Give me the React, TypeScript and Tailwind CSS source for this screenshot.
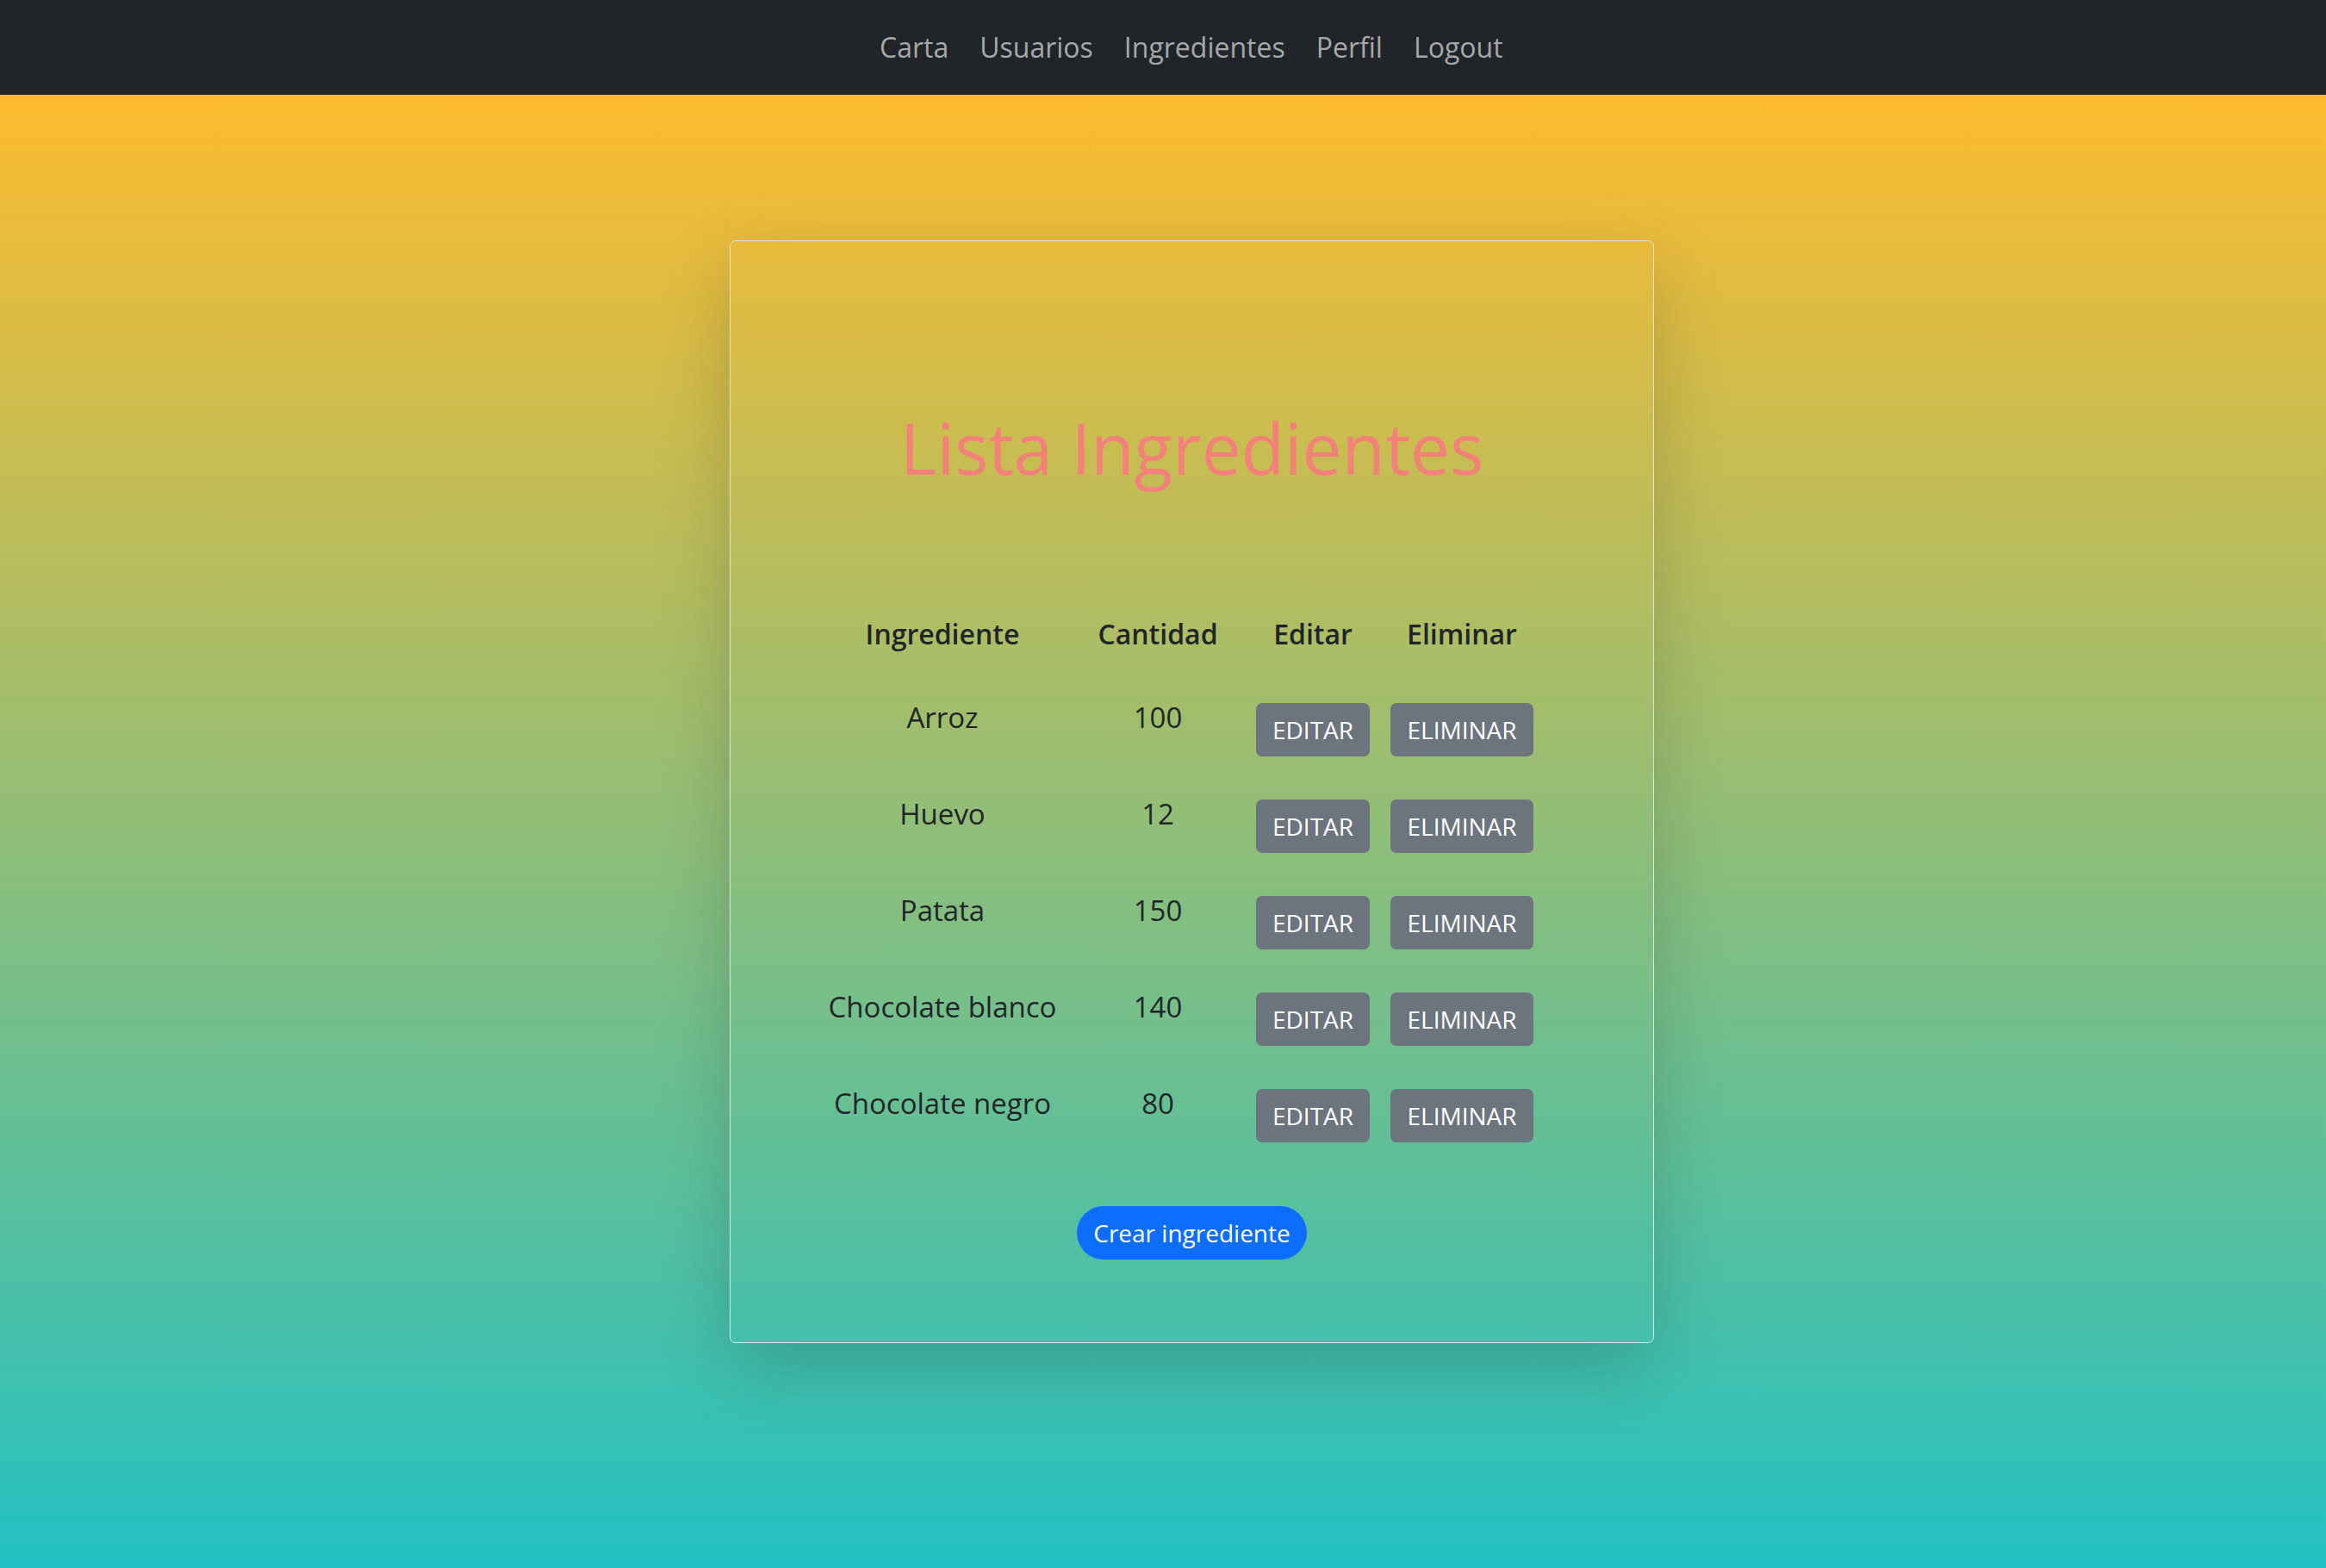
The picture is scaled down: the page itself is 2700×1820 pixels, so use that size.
const ingredientes = [
  { nombre: "Arroz", cantidad: 100 },
  { nombre: "Huevo", cantidad: 12 },
  { nombre: "Patata", cantidad: 150 },
  { nombre: "Chocolate blanco", cantidad: 140 },
  { nombre: "Chocolate negro", cantidad: 80 },
];

const links = ["Carta", "Usuarios", "Ingredientes", "Perfil", "Logout"];

const App = () => {
  return (
    <div className="w-[2700px] h-[1820px] flex flex-col font-['Open_Sans',sans-serif]">
      <nav className="h-[110px] bg-[#212529] flex items-center pl-[1021px] gap-[36px]">
        {links.map((l) => (
          <a key={l} className="text-[32px] text-[#a6a8aa] leading-none">
            {l}
          </a>
        ))}
      </nav>

      <main className="flex-1 bg-[linear-gradient(180deg,#fdbb2d_0%,#22c1c3_100%)] pt-[169px] pl-[847px]">
        <div className="w-[1073px] h-[1280px] border border-[#dee2e6] rounded-[7px] shadow-[0_28px_84px_rgba(0,0,0,0.175)] flex flex-col pt-[190px]">
          <h1 className="text-center text-[82px] leading-[1.2] text-[#f4807a] font-normal">
            Lista Ingredientes
          </h1>

          <div className="mt-[145px] ml-[90px] grid grid-cols-[312px_188px_172px_174px] text-[33px] leading-[45px] text-[#212529] text-center">
            <div className="h-[97px] font-semibold text-[32px]">Ingrediente</div>
            <div className="h-[97px] font-semibold text-[32px]">Cantidad</div>
            <div className="h-[97px] font-semibold text-[32px]">Editar</div>
            <div className="h-[97px] font-semibold text-[32px]">Eliminar</div>

            {ingredientes.map((i) => (
              <>
                <div key={i.nombre + "n"} className="h-[112px]">{i.nombre}</div>
                <div key={i.nombre + "c"} className="h-[112px]">{i.cantidad}</div>
                <div key={i.nombre + "e"} className="h-[112px] flex justify-center pt-[6px]">
                  <button className="h-[62px] px-[19px] bg-[#6c757d] text-white text-[28px] rounded-[7px] leading-none">
                    EDITAR
                  </button>
                </div>
                <div key={i.nombre + "d"} className="h-[112px] flex justify-center pt-[6px]">
                  <button className="h-[62px] px-[19px] bg-[#6c757d] text-white text-[28px] rounded-[7px] leading-none">
                    ELIMINAR
                  </button>
                </div>
              </>
            ))}
          </div>

          <div className="flex justify-center mt-[30px]">
            <button className="h-[62px] px-[19px] bg-[#0d6efd] text-white text-[28px] rounded-full leading-none">
              Crear ingrediente
            </button>
          </div>
        </div>
      </main>
    </div>
  );
};

export default App;
